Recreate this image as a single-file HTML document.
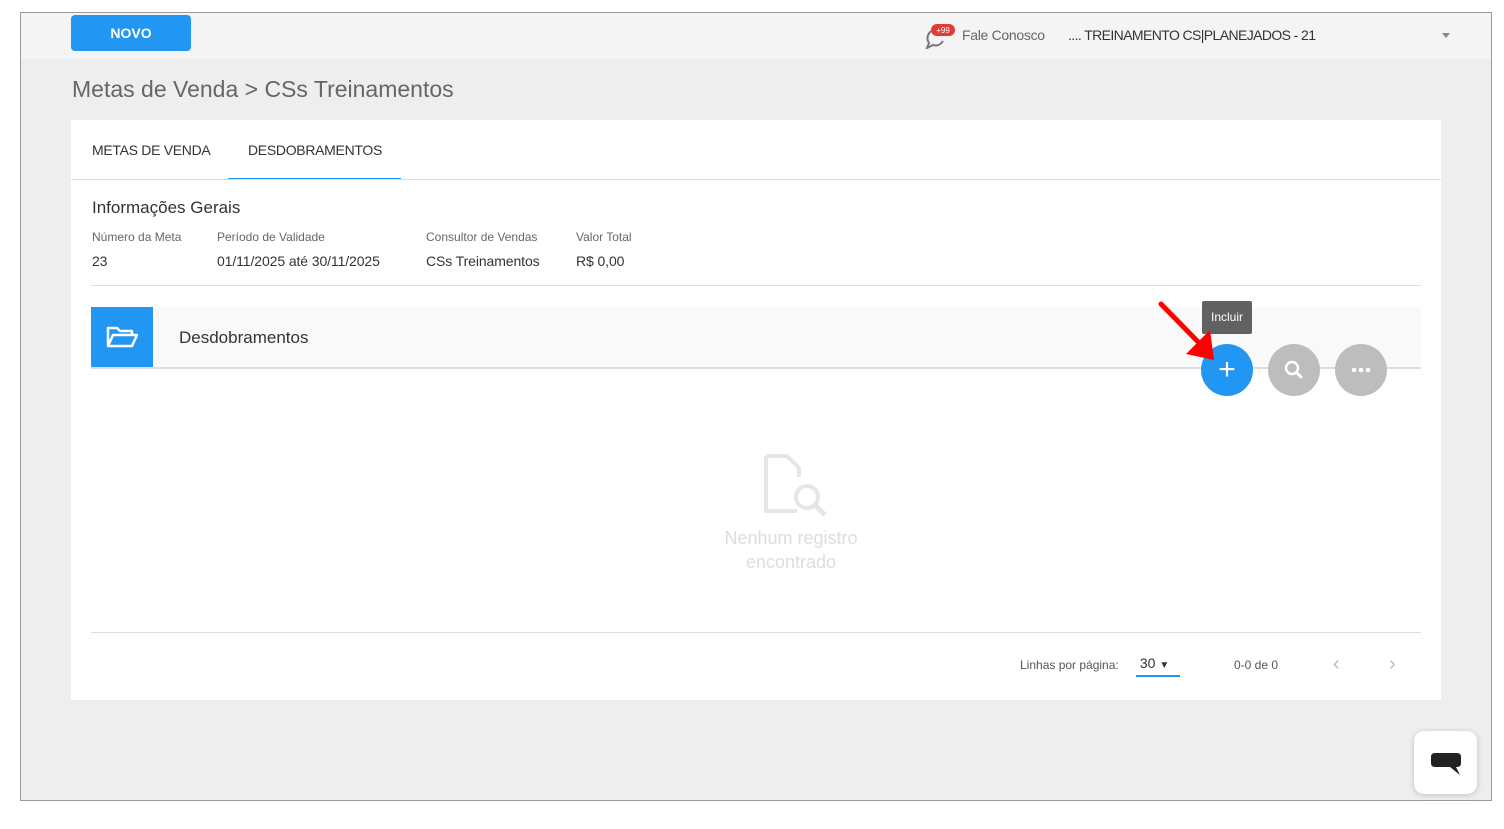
<!DOCTYPE html><html><head><meta charset="utf-8"><style>
body{margin:0;width:1504px;height:829px;background:#fff;font-family:"Liberation Sans",sans-serif;position:relative;overflow:hidden}
.frame{position:absolute;left:20px;top:12px;width:1470px;height:787px;border:1px solid #999;background:#eeeeee}
.top{position:absolute;left:0;top:0;right:0;height:46px;background:#f4f4f4}
.abs{position:absolute}
.card{position:absolute;left:50px;top:107px;width:1370px;height:580px;background:#fff}
.lbl{font-size:12px;color:#666}
.val{font-size:14px;color:#333;letter-spacing:-0.1px}
</style></head><body>
<div class="frame">
 <div class="top">
  <div class="abs" style="left:50px;top:2px;width:120px;height:36px;background:#2196f3;border-radius:4px;color:#fff;font-weight:bold;font-size:14px;text-align:center;line-height:36px">NOVO</div>
  <svg class="abs" style="left:902px;top:10px" width="34" height="26"><path d="M8 8 Q2 14 6 20 L4 25 L10 22 Q16 24 20 18" fill="none" stroke="#777" stroke-width="2"/><rect x="8" y="1" width="24" height="12" rx="6" fill="#e53935"/><text x="20" y="10" font-size="8" fill="#fff" text-anchor="middle" font-family="Liberation Sans">+99</text></svg>
  <div class="abs" style="left:941px;top:14px;font-size:14px;color:#666;letter-spacing:-0.3px">Fale Conosco</div>
  <div class="abs" style="left:1047px;top:14px;font-size:14px;color:#333;letter-spacing:-0.6px">.... TREINAMENTO CS|PLANEJADOS - 21</div>
  <div class="abs" style="left:1421px;top:20px;width:0;height:0;border-left:4px solid transparent;border-right:4px solid transparent;border-top:5px solid #888"></div>
 </div>
 <div class="abs" style="left:51px;top:63px;font-size:23px;color:#666">Metas de Venda &gt; CSs Treinamentos</div>
 <div class="card">
  <div class="abs" style="left:21px;top:22px;font-size:14px;color:#333;letter-spacing:-0.3px">METAS DE VENDA</div>
  <div class="abs" style="left:177px;top:22px;font-size:14px;color:#333;letter-spacing:-0.3px">DESDOBRAMENTOS</div>
  <div class="abs" style="left:157px;top:58px;width:173px;height:2px;background:#2196f3"></div>
  <div class="abs" style="left:0;top:59px;width:1370px;height:1px;background:#ddd"></div>
  <div class="abs" style="left:21px;top:78px;font-size:17px;color:#333">Informações Gerais</div>
  <div class="abs lbl" style="left:21px;top:110px">Número da Meta</div>
  <div class="abs lbl" style="left:146px;top:110px">Período de Validade</div>
  <div class="abs lbl" style="left:355px;top:110px">Consultor de Vendas</div>
  <div class="abs lbl" style="left:505px;top:110px">Valor Total</div>
  <div class="abs val" style="left:21px;top:133px">23</div>
  <div class="abs val" style="left:146px;top:133px">01/11/2025 até 30/11/2025</div>
  <div class="abs val" style="left:355px;top:133px">CSs Treinamentos</div>
  <div class="abs val" style="left:505px;top:133px">R$ 0,00</div>
  <div class="abs" style="left:20px;top:165px;width:1330px;height:1px;background:#ddd"></div>
  <div class="abs" style="left:20px;top:187px;width:1330px;height:60px;background:#f9f9f9;border-bottom:2px solid #ddd"></div>
  <div class="abs" style="left:20px;top:187px;width:62px;height:60px;background:#2196f3"></div>
  <svg class="abs" style="left:35px;top:204px" width="32" height="26"><path d="M2 22 V4 H11 L14 7 H26 V11 M2 22 L7 11 H31 L26 22 Z" fill="none" stroke="#fff" stroke-width="2.5" stroke-linejoin="round"/></svg>
  <div class="abs" style="left:108px;top:208px;font-size:17px;color:#333">Desdobramentos</div>
  <div class="abs" style="left:1131px;top:181px;width:50px;height:33px;background:#616161;border-radius:2px;color:#fff;font-size:12px;text-align:center;line-height:33px">Incluir</div>
  <div class="abs" style="left:1130px;top:224px;width:52px;height:52px;border-radius:50%;background:#2196f3;color:#fff;font-size:30px;text-align:center;line-height:52px">+</div>
  <div class="abs" style="left:1197px;top:224px;width:52px;height:52px;border-radius:50%;background:#bdbdbd"></div>
  <svg class="abs" style="left:1212px;top:239px" width="22" height="22"><circle cx="9" cy="9" r="6" fill="none" stroke="#fff" stroke-width="2.5"/><path d="M13 13 L19 19" stroke="#fff" stroke-width="3"/></svg>
  <div class="abs" style="left:1264px;top:224px;width:52px;height:52px;border-radius:50%;background:#bdbdbd"></div>
  <svg class="abs" style="left:1264px;top:224px" width="52" height="52"><circle cx="19" cy="26" r="2.3" fill="#fff"/><circle cx="26" cy="26" r="2.3" fill="#fff"/><circle cx="33" cy="26" r="2.3" fill="#fff"/></svg>
  <svg class="abs" style="left:1085px;top:180px" width="70" height="70"><path d="M5 4 L52 52" stroke="#f00" stroke-width="5" stroke-linecap="round"/><path d="M58 60 L30 54 L54 30 Z" fill="#f00"/></svg>
  <svg class="abs" style="left:692px;top:333px" width="66" height="66"><path d="M3 3 H24 L36 15 V24 M3 3 V58 H34" fill="none" stroke="#e6e6e6" stroke-width="4"/><circle cx="44" cy="44" r="11" fill="none" stroke="#e6e6e6" stroke-width="4"/><path d="M52 52 L62 62" stroke="#e6e6e6" stroke-width="5"/></svg>
  <div class="abs" style="left:620px;top:406px;width:200px;text-align:center;font-size:18px;color:#ddd;line-height:24px">Nenhum registro<br>encontrado</div>
  <div class="abs" style="left:20px;top:512px;width:1330px;height:1px;background:#ddd"></div>
  <div class="abs" style="left:949px;top:538px;font-size:12px;color:#555">Linhas por página:</div>
  <div class="abs" style="left:1065px;top:535px;width:44px;height:20px;border-bottom:2px solid #2196f3;font-size:14px;color:#333">&nbsp;30 <span style="font-size:10px">&#9660;</span></div>
  <div class="abs" style="left:1163px;top:538px;font-size:12px;color:#555">0-0 de 0</div>
  <div class="abs" style="left:1262px;top:533px;font-size:20px;color:#bbb">‹</div>
  <div class="abs" style="left:1318px;top:533px;font-size:20px;color:#bbb">›</div>
 </div>
 <div class="abs" style="left:1393px;top:718px;width:63px;height:63px;background:#fff;border-radius:10px;box-shadow:0 1px 6px rgba(0,0,0,.2)"></div>
 <svg class="abs" style="left:1409px;top:738px" width="32" height="26"><path d="M5 2 H27 Q31 2 31 6 V12 Q31 16 27 16 H26 L30 24 L20 16 H5 Q1 16 1 12 V6 Q1 2 5 2Z" fill="#222"/></svg>
</div>
</body></html>
